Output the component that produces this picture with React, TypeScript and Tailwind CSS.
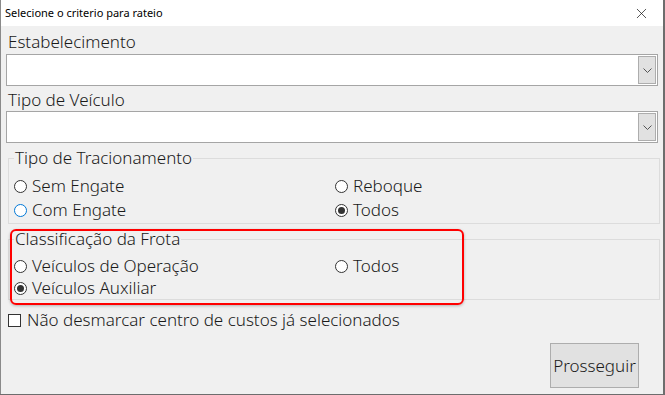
import { X } from 'lucide-react';

const font = "font-['Segoe_UI','Noto_Sans','Open_Sans',sans-serif]";

const Radio = ({ checked = false, focus = false }: { checked?: boolean; focus?: boolean }) => (
  <span
    className={`flex h-[13px] w-[13px] shrink-0 items-center justify-center rounded-full border bg-white ${
      focus ? 'border-[#0078d7]' : 'border-[#333333]'
    }`}
  >
    {checked && <span className="h-[7px] w-[7px] rounded-full bg-[#333333]" />}
  </span>
);

const Option = ({ label, checked, focus }: { label: string; checked?: boolean; focus?: boolean }) => (
  <div className="flex items-center gap-[5px]">
    <Radio checked={checked} focus={focus} />
    <span>{label}</span>
  </div>
);

const Combo = () => (
  <div className="flex h-[32px] w-[652px] border border-[#a5a5a5] bg-white p-px">
    <div className="flex-1" />
    <div className="flex w-[18px] items-center justify-center border border-[#adadad] bg-[#e1e1e1]">
      <svg width="9" height="5" viewBox="0 0 9 5" fill="none" stroke="#555" strokeWidth="1">
        <path d="M0.5 0.5 L4.5 4.5 L8.5 0.5" />
      </svg>
    </div>
  </div>
);

export default function App() {
  return (
    <div className={`relative h-[395px] w-[665px] bg-[#6d6d6d] ${font} text-[#1a1a1a]`}>
      <div className="flex h-[394px] w-[663px] flex-col border-l border-[#8a8a8a] bg-[#f0f0f0]">
        <div className="flex h-[26px] items-center justify-between bg-white pl-[4px] pr-[13px] text-[11px] text-black">
          <span>Selecione o criterio para rateio</span>
          <X className="h-[17px] w-[17px] text-[#111]" strokeWidth={1} />
        </div>

        <div className="flex flex-col px-[5px] text-[17px] font-light leading-[22px]">
          <div className="h-[28px] pt-[5px] pl-[2px]">Estabelecimento</div>
          <Combo />
          <div className="h-[25px] pt-[3px] pl-[2px]">Tipo de Veículo</div>
          <Combo />

          <fieldset className="mt-[4px] ml-[2px] w-[652px] border border-[#dcdcdc] pb-[1px] pl-[5px]">
            <legend className="px-[1px]">Tipo de Tracionamento</legend>
            <div className="mt-[5px] grid grid-cols-[321px_1fr] leading-[24px]">
              <Option label="Sem Engate" />
              <Option label="Reboque" />
              <Option label="Com Engate" focus />
              <Option label="Todos" checked />
            </div>
          </fieldset>

          <fieldset className="mt-[4px] ml-[2px] w-[652px] border border-[#dcdcdc] pl-[5px]">
            <legend className="px-[1px]">Classificação da Frota</legend>
            <div className="mt-[5px] grid grid-cols-[321px_1fr]">
              <Option label="Veículos de Operação" />
              <Option label="Todos" />
              <Option label="Veículos Auxiliar" checked />
            </div>
          </fieldset>

          <div className="mt-[9px] ml-[2px] flex h-[22px] items-center gap-[6px]">
            <span className="h-[13px] w-[13px] border border-[#333333] bg-white" />
            <span>Não desmarcar centro de custos já selecionados</span>
          </div>

          <div className="mt-[12px] flex justify-end pr-[19px]">
            <button className="h-[45px] w-[89px] border border-[#adadad] bg-[#e1e1e1] text-[17px] font-light">
              Prosseguir
            </button>
          </div>
        </div>
      </div>

      <div className="absolute left-[10px] top-[229px] h-[76px] w-[454px] rounded-[6px] border-2 border-[#ff0000] shadow-[0_1px_3px_rgba(0,0,0,0.25)]" />
    </div>
  );
}
